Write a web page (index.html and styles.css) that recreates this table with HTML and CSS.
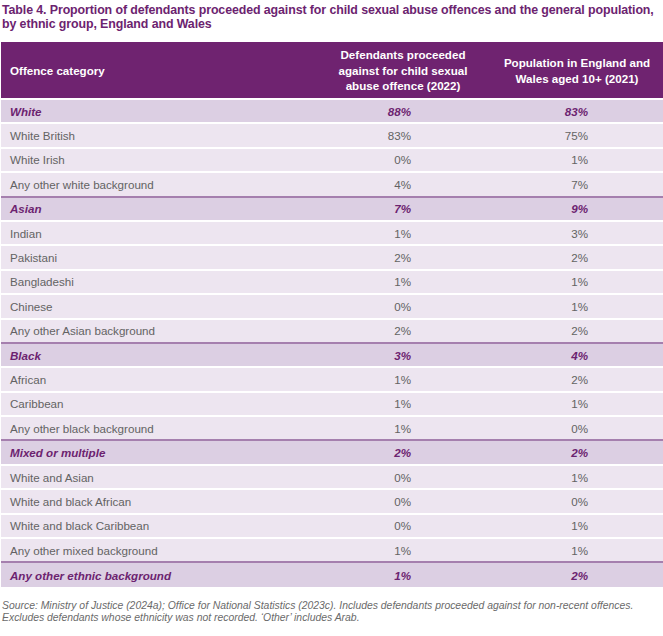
FILE: index.html
```html
<!DOCTYPE html>
<html>
<head>
<meta charset="utf-8">
<link rel="stylesheet" href="styles.css">
</head>
<body>
<div class="page">
  <h1 class="title">Table 4. Proportion of defendants proceeded against for child sexual abuse offences and the general population, by ethnic group, England and Wales</h1>
  <table class="data">
    <colgroup>
      <col class="w1">
      <col class="w2">
      <col class="w3">
    </colgroup>
    <thead>
      <tr>
        <th class="cat">Offence category</th>
        <th class="c2">Defendants proceeded against for child sexual abuse offence (2022)</th>
        <th class="c3">Population in England and Wales aged 10+ (2021)</th>
      </tr>
    </thead>
    <tbody>
      <tr class="group first"><td>White</td><td class="n2">88%</td><td class="n3">83%</td></tr>
      <tr><td>White British</td><td class="n2">83%</td><td class="n3">75%</td></tr>
      <tr><td>White Irish</td><td class="n2">0%</td><td class="n3">1%</td></tr>
      <tr><td>Any other white background</td><td class="n2">4%</td><td class="n3">7%</td></tr>
      <tr class="group"><td>Asian</td><td class="n2">7%</td><td class="n3">9%</td></tr>
      <tr><td>Indian</td><td class="n2">1%</td><td class="n3">3%</td></tr>
      <tr><td>Pakistani</td><td class="n2">2%</td><td class="n3">2%</td></tr>
      <tr><td>Bangladeshi</td><td class="n2">1%</td><td class="n3">1%</td></tr>
      <tr><td>Chinese</td><td class="n2">0%</td><td class="n3">1%</td></tr>
      <tr><td>Any other Asian background</td><td class="n2">2%</td><td class="n3">2%</td></tr>
      <tr class="group"><td>Black</td><td class="n2">3%</td><td class="n3">4%</td></tr>
      <tr><td>African</td><td class="n2">1%</td><td class="n3">2%</td></tr>
      <tr><td>Caribbean</td><td class="n2">1%</td><td class="n3">1%</td></tr>
      <tr><td>Any other black background</td><td class="n2">1%</td><td class="n3">0%</td></tr>
      <tr class="group"><td>Mixed or multiple</td><td class="n2">2%</td><td class="n3">2%</td></tr>
      <tr><td>White and Asian</td><td class="n2">0%</td><td class="n3">1%</td></tr>
      <tr><td>White and black African</td><td class="n2">0%</td><td class="n3">0%</td></tr>
      <tr><td>White and black Caribbean</td><td class="n2">0%</td><td class="n3">1%</td></tr>
      <tr><td>Any other mixed background</td><td class="n2">1%</td><td class="n3">1%</td></tr>
      <tr class="group"><td>Any other ethnic background</td><td class="n2">1%</td><td class="n3">2%</td></tr>
    </tbody>
  </table>
  <p class="source">Source: Ministry of Justice (2024a); Office for National Statistics (2023c). Includes defendants proceeded against for non-recent offences. Excludes defendants whose ethnicity was not recorded. ‘Other’ includes Arab.</p>
</div>
</body>
</html>
```

FILE: styles.css
```css
html, body {
  margin: 0;
  padding: 0;
  background: #ffffff;
}

.page {
  width: 663px;
  font-family: "Liberation Sans", Arial, sans-serif;
}

.title {
  margin: 0;
  padding: 3px 0 0 2px;
  font-size: 12.4px;
  line-height: 14px;
  font-weight: bold;
  color: #6c2370;
  letter-spacing: -0.1px;
}

.data {
  margin: 11px 0 0 1px;
  width: 662px;
  border-collapse: collapse;
  table-layout: fixed;
}

.w1 { width: 330px; }
.w2 { width: 160px; }
.w3 { width: 172px; }

.data th,
.data td {
  box-sizing: border-box;
}

.data th {
  background: #6f2370;
  color: #ffffff;
  font-weight: bold;
  font-size: 11.6px;
  line-height: 15.5px;
  height: 57px;
  padding: 1px 0 0 0;
  vertical-align: middle;
}

.data th.cat {
  text-align: left;
  padding-left: 9px;
}

.data th.c2 {
  text-align: center;
  padding-right: 16px;
}

.data th.c3 {
  text-align: center;
  padding-right: 0;
}

.data td {
  height: 24.4px;
  padding: 0;
  font-size: 11.6px;
  color: #636363;
  background: #ede5f0;
  border-top: 2px solid #ffffff;
  vertical-align: middle;
}

.data td:first-child {
  padding-left: 9px;
}

.data td.n2 {
  text-align: right;
  padding-right: 80px;
}

.data td.n3 {
  text-align: right;
  padding-right: 75px;
}

.data tr.group td {
  background: #dccfe3;
  color: #6c2370;
  font-weight: bold;
  font-style: italic;
  border-top: 2px solid #a57fae;
}

.data tr.group.first td {
  border-top: 2px solid #ffffff;
}

.source {
  margin: 13px 0 0 2px;
  font-size: 10.4px;
  line-height: 12px;
  font-style: italic;
  color: #6a6a6a;
}
```
